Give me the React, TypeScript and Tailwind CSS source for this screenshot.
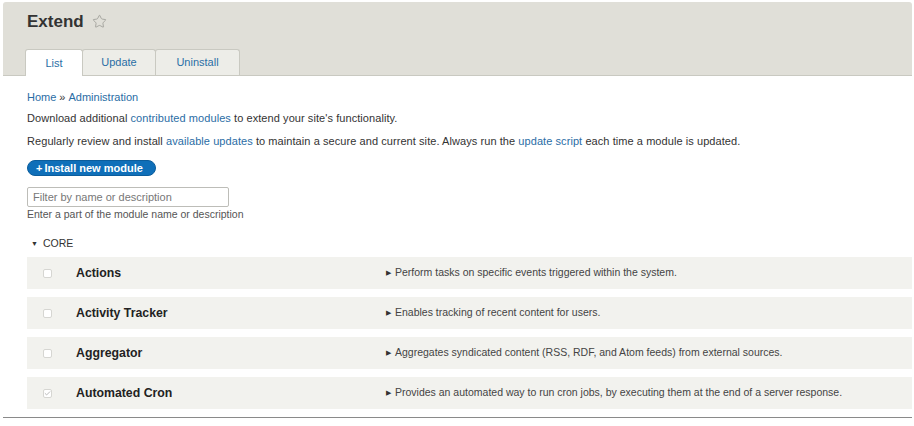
import React from "react";
import { Star, Check } from "lucide-react";

const modules = [
  { name: "Actions", desc: "Perform tasks on specific events triggered within the system.", on: false },
  { name: "Activity Tracker", desc: "Enables tracking of recent content for users.", on: false },
  { name: "Aggregator", desc: "Aggregates syndicated content (RSS, RDF, and Atom feeds) from external sources.", on: false },
  { name: "Automated Cron", desc: "Provides an automated way to run cron jobs, by executing them at the end of a server response.", on: true },
];

const Tab = ({ label, active, width }: { label: string; active?: boolean; width: string }) => (
  <div
    className={`${width} h-[26px] flex items-center justify-center text-[11px] text-[#2a6da5] border border-b-0 border-[#c9c9c1] rounded-t-[3px] -ml-px first:ml-0 ${
      active ? "bg-white relative z-10 h-[27px] -mb-px" : "bg-[#ededE8]"
    }`}
  >
    {label}
  </div>
);

const ModuleRow = ({ name, desc, on }: { name: string; desc: string; on: boolean }) => (
  <div className="h-[32px] bg-[#f2f2ee] flex items-center">
    <div className="w-[49px] flex justify-end">
      <span className="w-[9px] h-[9px] mr-[24px] border border-[#d6d6d2] rounded-[2px] bg-white flex items-center justify-center">
        {on && <Check className="w-[7px] h-[7px] text-[#b0b0b0]" strokeWidth={3} />}
      </span>
    </div>
    <div className="w-[310px] text-[12.3px] font-bold text-[#222]">{name}</div>
    <div className="flex items-center text-[10.5px] text-[#444]">
      <span className="text-[7px] mr-[4px] text-[#333]">▶</span>
      {desc}
    </div>
  </div>
);

export default function App() {
  return (
    <div className="w-[914px] h-[426px] bg-white pl-[3px] pr-[2px] pt-[2px] font-['Liberation_Sans',Arial,sans-serif] text-[#333] overflow-hidden">
      <header className="h-[74px] bg-[#e0dfd8] rounded-t-[3px] flex flex-col border-b border-[#c9c9c1]">
        <div className="flex items-center pl-[24px] pt-[11px]">
          <h1 className="text-[17px] font-bold text-[#333] leading-none">Extend</h1>
          <Star className="w-[15px] h-[15px] ml-[8px] text-[#9a9a94]" strokeWidth={1.3} />
        </div>
        <nav className="mt-auto flex pl-[22px] items-end">
          <Tab label="List" active width="w-[58px]" />
          <Tab label="Update" width="w-[74px]" />
          <Tab label="Uninstall" width="w-[85px]" />
        </nav>
      </header>

      <main className="pl-[24px]">
        <div className="mt-[14px] h-[14px] flex items-center text-[11px] text-[#2a6da5]">
          Home <span className="mx-[3px] text-[#333]">»</span> Administration
        </div>
        <p className="mt-[7px] h-[14px] flex items-center text-[11px] tracking-[0.07px]">
          Download additional&nbsp;<span className="text-[#2a6da5]">contributed modules</span>&nbsp;to extend your site's functionality.
        </p>
        <p className="mt-[9px] h-[14px] flex items-center text-[11px] tracking-[0.07px]">
          Regularly review and install&nbsp;<span className="text-[#2a6da5]">available updates</span>&nbsp;to maintain a secure and current site. Always run the&nbsp;
          <span className="text-[#2a6da5]">update script</span>&nbsp;each time a module is updated.
        </p>
        <button className="mt-[12px] w-[129px] h-[16px] rounded-full bg-[#0f6fb9] border border-[#0b5d9c] text-white text-[11px] font-bold flex items-center pl-[8px] leading-none">
          +<span className="ml-[2px]">Install new module</span>
        </button>
        <input
          className="block mt-[11px] w-[202px] h-[20px] border border-[#bdbdb8] rounded-[2px] px-[5px] text-[11px] placeholder:text-[#777] outline-none"
          placeholder="Filter by name or description"
        />
        <div className="mt-[2px] h-[12px] flex items-center text-[10.5px] text-[#555]">
          Enter a part of the module name or description
        </div>
        <div className="mt-[16px] h-[14px] flex items-center text-[10.5px] pl-[4px] text-[#333]">
          <span className="text-[7px] mr-[5px]">▼</span>CORE
        </div>
        <div className="mt-[6px] flex flex-col gap-[8px]">
          {modules.map((m) => (
            <ModuleRow key={m.name} {...m} />
          ))}
        </div>
      </main>
      <div className="mt-[8px] border-b border-[#8a8a8a]" />
    </div>
  );
}
